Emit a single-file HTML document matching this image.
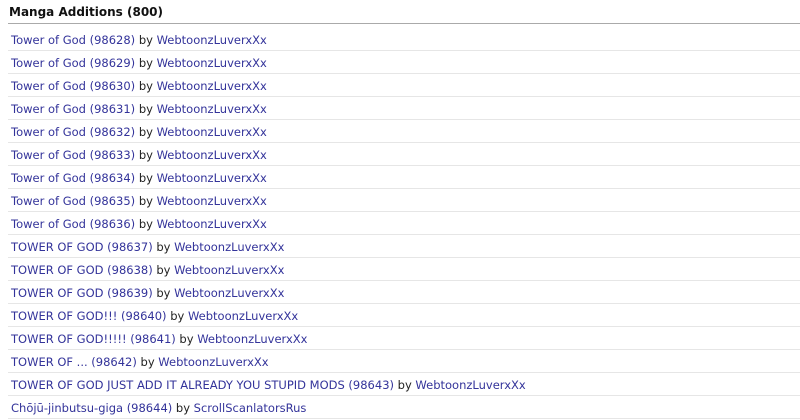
<!DOCTYPE html>
<html><head><style>
body{margin:0;background:#fff;font-family:"DejaVu Sans","Liberation Sans",sans-serif;width:800px;height:417px;overflow:hidden}
h2{margin:0;position:absolute;left:9px;top:5px;font-size:12px;font-weight:bold;color:#111}
.hr{position:absolute;left:8px;right:0;top:23px;height:1px;background:#aaa}
ul{list-style:none;margin:0;padding:0;position:absolute;left:8px;right:0;top:28px}
li{height:22px;line-height:24px;border-bottom:1px solid #e6e6e6;padding-left:3px;font-size:11.5px;color:#222;white-space:nowrap}
a{color:#33339a;text-decoration:none}
</style></head><body>
<h2>Manga Additions (800)</h2><div class="hr"></div>
<ul>
<li><a>Tower of God (98628)</a> by <a>WebtoonzLuverxXx</a></li>
<li><a>Tower of God (98629)</a> by <a>WebtoonzLuverxXx</a></li>
<li><a>Tower of God (98630)</a> by <a>WebtoonzLuverxXx</a></li>
<li><a>Tower of God (98631)</a> by <a>WebtoonzLuverxXx</a></li>
<li><a>Tower of God (98632)</a> by <a>WebtoonzLuverxXx</a></li>
<li><a>Tower of God (98633)</a> by <a>WebtoonzLuverxXx</a></li>
<li><a>Tower of God (98634)</a> by <a>WebtoonzLuverxXx</a></li>
<li><a>Tower of God (98635)</a> by <a>WebtoonzLuverxXx</a></li>
<li><a>Tower of God (98636)</a> by <a>WebtoonzLuverxXx</a></li>
<li><a>TOWER OF GOD (98637)</a> by <a>WebtoonzLuverxXx</a></li>
<li><a>TOWER OF GOD (98638)</a> by <a>WebtoonzLuverxXx</a></li>
<li><a>TOWER OF GOD (98639)</a> by <a>WebtoonzLuverxXx</a></li>
<li><a>TOWER OF GOD!!! (98640)</a> by <a>WebtoonzLuverxXx</a></li>
<li><a>TOWER OF GOD!!!!! (98641)</a> by <a>WebtoonzLuverxXx</a></li>
<li><a>TOWER OF ... (98642)</a> by <a>WebtoonzLuverxXx</a></li>
<li><a>TOWER OF GOD JUST ADD IT ALREADY YOU STUPID MODS (98643)</a> by <a>WebtoonzLuverxXx</a></li>
<li><a>Chōjū-jinbutsu-giga (98644)</a> by <a>ScrollScanlatorsRus</a></li>
</ul>
</body></html>
